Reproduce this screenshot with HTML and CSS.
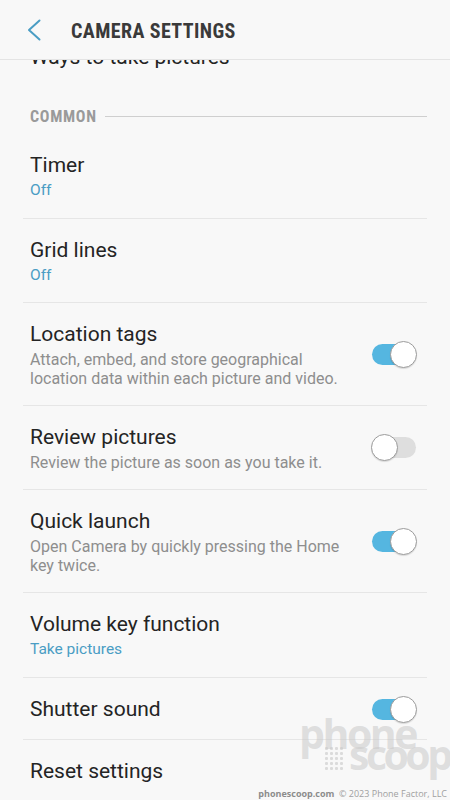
FILE: index.html
```html
<!DOCTYPE html>
<html lang="en">
<head>
    <meta charset="UTF-8">
    <meta name="viewport" content="width=device-width, initial-scale=1.0">
    <title>Camera Settings</title>
    <link rel="stylesheet" href="styles.css">
</head>
<body>
    <div class="screen">
        <header class="appbar">
            <svg class="back" width="14" height="22" viewBox="0 0 14 22">
                <polyline points="12.5,1.5 2,11 12.5,20.5" fill="none" stroke="#4a9dc4" stroke-width="2" stroke-linecap="round" stroke-linejoin="round"/>
            </svg>
            <h1 class="appbar-title">CAMERA SETTINGS</h1>
        </header>

        <main class="content">
            <div class="list scrolled">
                <div class="row single">
                    <div class="row-text">
                        <div class="title">Ways to take pictures</div>
                    </div>
                </div>
            </div>

            <div class="section-head">
                <span class="section-label">COMMON</span>
                <span class="section-line"></span>
            </div>

            <div class="list">
                <div class="row">
                    <div class="row-text">
                        <div class="title">Timer</div>
                        <div class="value">Off</div>
                    </div>
                </div>
                <div class="row">
                    <div class="row-text">
                        <div class="title">Grid lines</div>
                        <div class="value">Off</div>
                    </div>
                </div>
                <div class="row">
                    <div class="row-text">
                        <div class="title">Location tags</div>
                        <div class="desc">Attach, embed, and store geographical location data within each picture and video.</div>
                    </div>
                    <div class="switch on"><span class="track"></span><span class="thumb"></span></div>
                </div>
                <div class="row">
                    <div class="row-text">
                        <div class="title">Review pictures</div>
                        <div class="desc">Review the picture as soon as you take it.</div>
                    </div>
                    <div class="switch"><span class="track"></span><span class="thumb"></span></div>
                </div>
                <div class="row">
                    <div class="row-text">
                        <div class="title">Quick launch</div>
                        <div class="desc">Open Camera by quickly pressing the Home key twice.</div>
                    </div>
                    <div class="switch on"><span class="track"></span><span class="thumb"></span></div>
                </div>
                <div class="row">
                    <div class="row-text">
                        <div class="title">Volume key function</div>
                        <div class="value">Take pictures</div>
                    </div>
                </div>
                <div class="row single">
                    <div class="row-text">
                        <div class="title">Shutter sound</div>
                    </div>
                    <div class="switch on"><span class="track"></span><span class="thumb"></span></div>
                </div>
                <div class="row single">
                    <div class="row-text">
                        <div class="title">Reset settings</div>
                    </div>
                </div>
            </div>
        </main>

        <div class="watermark">
            <span class="wm-phone">phone</span>
            <div class="wm-bottom">
                <span class="wm-dots">
                    <i></i><i></i><i></i><i></i>
                    <i></i><i></i><i></i><i></i>
                    <i></i><i></i><i></i><i></i>
                    <i></i><i></i><i></i><i></i>
                    <i></i><i></i><i></i><i></i>
                </span>
                <span class="wm-scoop">scoop</span>
            </div>
        </div>
        <div class="wm-credit"><b>phonescoop.com</b> &nbsp;© 2023 Phone Factor, LLC</div>
    </div>
</body>
</html>
```

FILE: styles.css
```css
html, body {
    margin: 0;
    padding: 0;
}
body {
    background: #f8f8f8;
    font-family: Roboto, "Noto Sans", sans-serif;
    color: #262626;
}
.screen {
    position: relative;
    width: 450px;
    height: 800px;
    overflow: hidden;
}
.appbar {
    position: relative;
    z-index: 2;
    display: flex;
    align-items: center;
    height: 59px;
    padding-left: 27px;
    background: #f8f8f8;
    border-bottom: 1px solid #e4e4e4;
}
.back {
    display: block;
    margin-top: 1px;
}
.appbar-title {
    margin: 2px 0 0 30px;
    font-size: 20px;
    font-weight: 700;
    font-stretch: 80%;
    letter-spacing: 0.4px;
    color: #3a3a3a;
    line-height: 24px;
}
.content {
    position: relative;
    z-index: 1;
}
.list {
    margin: 0 23px;
}
.scrolled {
    margin-top: -34px;
}
.row {
    display: flex;
    align-items: center;
    padding: 19px 10px 17px 7px;
}
.row + .row {
    border-top: 1px solid #e6e6e6;
}
.row.single {
    padding-bottom: 18px;
}
.row-text {
    flex: 1;
    min-width: 0;
}
.title {
    font-size: 21px;
    line-height: 24px;
    color: #242424;
}
.value {
    margin-top: 4px;
    font-size: 15.5px;
    line-height: 19.5px;
    color: #4a9dc4;
}
.desc {
    margin-top: 4px;
    padding-right: 20px;
    font-size: 16px;
    line-height: 19px;
    color: #8e8e8e;
}
.section-head {
    display: flex;
    align-items: center;
    margin: 0 23px 0 30px;
    padding: 21px 0 8px;
}
.section-label {
    font-size: 16px;
    line-height: 18px;
    font-weight: 700;
    font-stretch: 80%;
    letter-spacing: 0.7px;
    color: #9a9a9a;
}
.section-line {
    flex: 1;
    height: 1px;
    margin: 0 0 2px 8px;
    background: #cfcfcf;
}
.switch {
    position: relative;
    flex: none;
    width: 46px;
    height: 26px;
    margin: -4px 0 -1px;
}
.row.single .switch {
    margin: -2px 0 -2px;
}
.track {
    position: absolute;
    top: 3px;
    left: 1px;
    right: 1px;
    height: 21px;
    border-radius: 11px;
    background: #dedede;
}
.switch.on .track {
    background: #55b6e0;
}
.thumb {
    position: absolute;
    top: 0;
    left: 0;
    width: 25px;
    height: 25px;
    border-radius: 50%;
    background: #fff;
    border: 1px solid #9c9c9c;
    box-shadow: 0 1px 1px rgba(0, 0, 0, 0.12);
}
.switch.on .thumb {
    left: auto;
    right: 0;
}
.watermark {
    position: absolute;
    z-index: 3;
    left: 299px;
    top: 713px;
    width: 150px;
    font-family: "Open Sans", sans-serif;
    font-weight: 700;
    color: rgba(200, 200, 200, 0.55);
    pointer-events: none;
}
.wm-phone {
    display: block;
    font-size: 41px;
    line-height: 41px;
    letter-spacing: -2.5px;
}
.wm-bottom {
    display: flex;
    align-items: flex-start;
    margin-top: -20px;
}
.wm-dots {
    display: grid;
    grid-template-columns: repeat(4, 3px);
    gap: 2px;
    margin: 13px 6px 0 26px;
}
.wm-dots i {
    width: 3px;
    height: 3px;
    border-radius: 1px;
    background: rgba(200, 200, 200, 0.6);
}
.wm-scoop {
    font-size: 41px;
    line-height: 41px;
    letter-spacing: -3.5px;
}
.wm-credit {
    position: absolute;
    z-index: 3;
    right: 3px;
    bottom: 1px;
    font-family: "Open Sans", sans-serif;
    font-size: 9px;
    line-height: 11px;
    color: #a0a0a0;
    white-space: nowrap;
}
.wm-credit b {
    color: #8c8c8c;
}
```
